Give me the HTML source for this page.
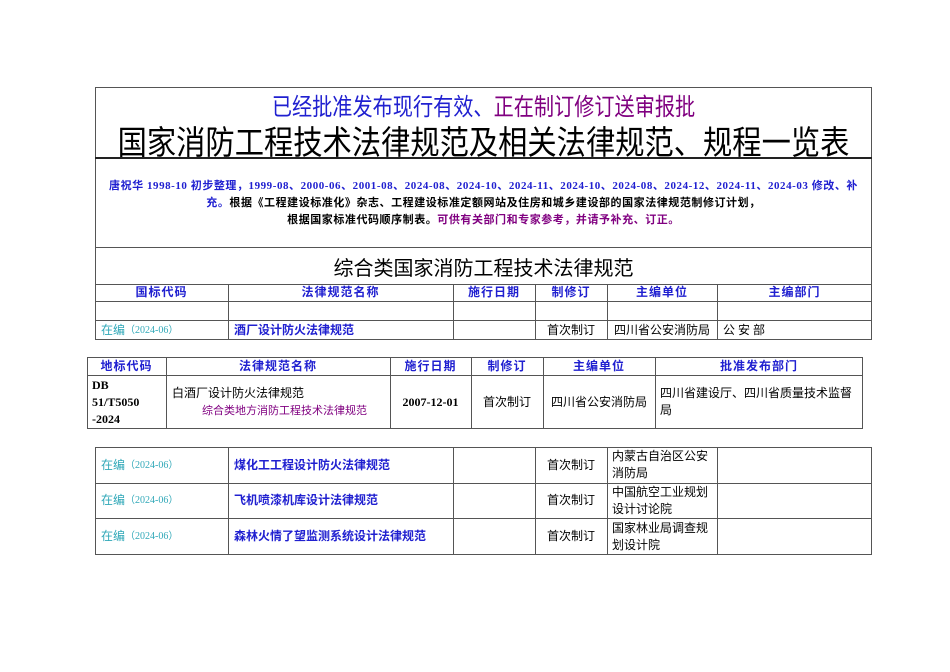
<!DOCTYPE html>
<html><head><meta charset="utf-8"><style>
body{margin:0;width:950px;height:672px;background:#fff;position:relative;font-family:"Liberation Serif","Noto Sans CJK SC",serif;overflow:hidden}
.a{position:absolute;box-sizing:border-box}
.hl{position:absolute;height:0;border-top:1px solid #555}
.vl{position:absolute;width:0;border-left:1px solid #555}
.c{position:absolute;display:flex;align-items:center;justify-content:center;font-size:12px;line-height:17px;box-sizing:border-box}
.h{color:#2020d0;font-weight:bold;letter-spacing:1px}
.bl{color:#2020d0}.pu{color:#800080}.cy{color:#30a8b8}
.s{font-size:10px}
.n{white-space:nowrap}
</style></head><body>
<!-- box 1 -->
<div class="a" style="left:95px;top:87px;width:777px;height:253px;border:1px solid #555"></div>
<div class="c" style="left:95px;top:90px;width:777px;height:28px;font-size:24px;font-family:'Noto Sans CJK SC',sans-serif;transform:scaleX(0.84);white-space:nowrap"><span class="bl">已经批准发布现行有效、</span><span class="pu">正在制订修订送审报批</span></div>
<div class="c" style="left:95px;top:120px;width:777px;height:40px;font-size:33px;font-family:'Noto Sans CJK SC',sans-serif;transform:scaleX(0.887);white-space:nowrap">国家消防工程技术法律规范及相关法律规范、规程一览表</div>
<div class="hl" style="left:95px;top:157px;width:777px;border-top:2px solid #222"></div>
<div class="a n" style="left:95px;top:178px;width:777px;font-size:11px;font-weight:bold;text-align:center;line-height:17px;letter-spacing:0.55px">
<span class="bl">唐祝华 1998-10 初步整理，1999-08、2000-06、2001-08、2024-08、2024-10、2024-11、2024-10、2024-08、2024-12、2024-11、2024-03 修改、补</span><br><span class="bl">充。</span>根据《工程建设标准化》杂志、工程建设标准定额网站及住房和城乡建设部的国家法律规范制修订计划，<br>根据国家标准代码顺序制表。<span class="pu">可供有关部门和专家参考，并请予补充、订正。</span></div>
<div class="hl" style="left:95px;top:247px;width:777px"></div>
<div class="c" style="left:95px;top:250px;width:777px;height:32px;font-size:20px;font-family:'Noto Sans CJK SC',sans-serif">综合类国家消防工程技术法律规范</div>
<div class="hl" style="left:95px;top:284px;width:777px"></div>
<div class="hl" style="left:95px;top:301px;width:777px"></div>
<div class="hl" style="left:95px;top:320px;width:777px"></div>
<div class="vl" style="left:228px;top:284px;height:56px"></div>
<div class="vl" style="left:453px;top:284px;height:56px"></div>
<div class="vl" style="left:535px;top:284px;height:56px"></div>
<div class="vl" style="left:607px;top:284px;height:56px"></div>
<div class="vl" style="left:717px;top:284px;height:56px"></div>
<div class="c h" style="left:95px;top:284px;width:133px;height:17px">国标代码</div>
<div class="c h" style="left:228px;top:284px;width:225px;height:17px">法律规范名称</div>
<div class="c h" style="left:453px;top:284px;width:82px;height:17px">施行日期</div>
<div class="c h" style="left:535px;top:284px;width:72px;height:17px">制修订</div>
<div class="c h" style="left:607px;top:284px;width:110px;height:17px">主编单位</div>
<div class="c h" style="left:717px;top:284px;width:155px;height:17px">主编部门</div>
<div class="c cy" style="left:95px;top:320px;width:133px;height:20px;justify-content:flex-start;padding-left:6px">在编<span class="s">（2024-06）</span></div>
<div class="c bl" style="left:228px;top:320px;width:225px;height:20px;justify-content:flex-start;padding-left:6px;font-weight:bold">酒厂设计防火法律规范</div>
<div class="c" style="left:535px;top:320px;width:72px;height:20px">首次制订</div>
<div class="c" style="left:607px;top:320px;width:110px;height:20px">四川省公安消防局</div>
<div class="c" style="left:717px;top:320px;width:155px;height:20px;justify-content:flex-start;padding-left:6px">公 安 部</div>
<!-- box 2 -->
<div class="a" style="left:87px;top:357px;width:776px;height:72px;border:1px solid #555"></div>
<div class="hl" style="left:87px;top:375px;width:776px"></div>
<div class="vl" style="left:166px;top:357px;height:72px"></div>
<div class="vl" style="left:390px;top:357px;height:72px"></div>
<div class="vl" style="left:471px;top:357px;height:72px"></div>
<div class="vl" style="left:543px;top:357px;height:72px"></div>
<div class="vl" style="left:655px;top:357px;height:72px"></div>
<div class="c h" style="left:87px;top:357px;width:79px;height:18px">地标代码</div>
<div class="c h" style="left:166px;top:357px;width:224px;height:18px">法律规范名称</div>
<div class="c h" style="left:390px;top:357px;width:81px;height:18px">施行日期</div>
<div class="c h" style="left:471px;top:357px;width:72px;height:18px">制修订</div>
<div class="c h" style="left:543px;top:357px;width:112px;height:18px">主编单位</div>
<div class="c h" style="left:655px;top:357px;width:208px;height:18px">批准发布部门</div>
<div class="a" style="left:92px;top:377px;font-size:12px;font-weight:bold;line-height:17px">DB<br>51/T5050<br>-2024</div>
<div class="a" style="left:172px;top:385px;width:215px;font-size:12px;line-height:17px">白酒厂设计防火法律规范<br><span class="pu" style="padding-left:30px;font-size:11px">综合类地方消防工程技术法律规范</span></div>
<div class="c" style="left:390px;top:375px;width:81px;height:54px;font-weight:bold">2007-12-01</div>
<div class="c" style="left:471px;top:375px;width:72px;height:54px">首次制订</div>
<div class="c" style="left:543px;top:375px;width:112px;height:54px">四川省公安消防局</div>
<div class="c" style="left:655px;top:375px;width:208px;height:54px;justify-content:flex-start;padding-left:5px">四川省建设厅、四川省质量技术监督局</div>
<!-- box 3 -->
<div class="a" style="left:95px;top:447px;width:777px;height:108px;border:1px solid #555"></div>
<div class="hl" style="left:95px;top:483px;width:777px"></div>
<div class="hl" style="left:95px;top:518px;width:777px"></div>
<div class="vl" style="left:228px;top:447px;height:108px"></div>
<div class="vl" style="left:453px;top:447px;height:108px"></div>
<div class="vl" style="left:535px;top:447px;height:108px"></div>
<div class="vl" style="left:607px;top:447px;height:108px"></div>
<div class="vl" style="left:717px;top:447px;height:108px"></div>
<div class="c cy" style="left:95px;top:447px;width:133px;height:36px;justify-content:flex-start;padding-left:6px">在编<span class="s">（2024-06）</span></div>
<div class="c bl" style="left:228px;top:447px;width:225px;height:36px;justify-content:flex-start;padding-left:6px;font-weight:bold">煤化工工程设计防火法律规范</div>
<div class="c" style="left:535px;top:447px;width:72px;height:36px">首次制订</div>
<div class="c" style="left:607px;top:447px;width:110px;height:36px;justify-content:flex-start;padding-left:5px">内蒙古自治区公安消防局</div>
<div class="c cy" style="left:95px;top:483px;width:133px;height:35px;justify-content:flex-start;padding-left:6px">在编<span class="s">（2024-06）</span></div>
<div class="c bl" style="left:228px;top:483px;width:225px;height:35px;justify-content:flex-start;padding-left:6px;font-weight:bold">飞机喷漆机库设计法律规范</div>
<div class="c" style="left:535px;top:483px;width:72px;height:35px">首次制订</div>
<div class="c" style="left:607px;top:483px;width:110px;height:35px;justify-content:flex-start;padding-left:5px">中国航空工业规划设计讨论院</div>
<div class="c cy" style="left:95px;top:518px;width:133px;height:37px;justify-content:flex-start;padding-left:6px">在编<span class="s">（2024-06）</span></div>
<div class="c bl" style="left:228px;top:518px;width:225px;height:37px;justify-content:flex-start;padding-left:6px;font-weight:bold">森林火情了望监测系统设计法律规范</div>
<div class="c" style="left:535px;top:518px;width:72px;height:37px">首次制订</div>
<div class="c" style="left:607px;top:518px;width:110px;height:37px;justify-content:flex-start;padding-left:5px">国家林业局调查规划设计院</div>
</body></html>
